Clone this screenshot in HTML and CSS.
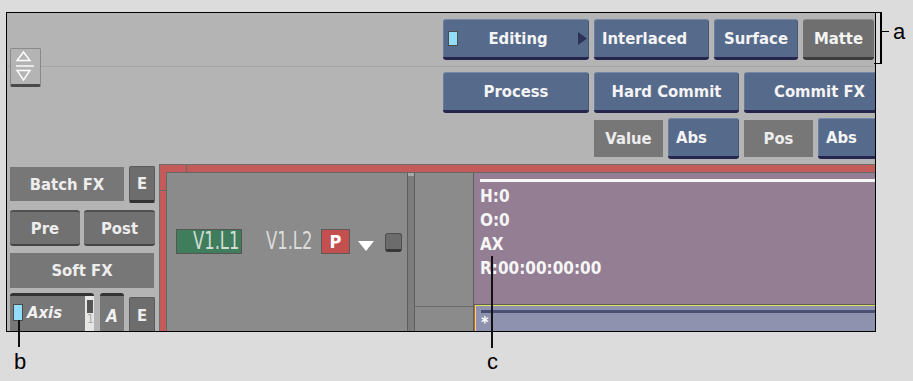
FILE: index.html
```html
<!DOCTYPE html>
<html lang="en">
<head>
    <meta charset="UTF-8">
    <meta name="viewport" content="width=device-width, initial-scale=1.0">
    <title>Batch FX - Editing Menu</title>
  <link rel="stylesheet" href="styles.css">
</head>
<body>
    <div class="stage">
        <div class="panel">
            <div class="top">
                <div class="toggle">
                    <svg width="29" height="35" viewBox="0 0 29 35">
                        <path d="M12.5 3 L19 11.5 L6 11.5 Z" fill="none" stroke="#fff" stroke-width="1.4"/>
                        <path d="M5 17 H23" stroke="#fff" stroke-width="1.4"/>
                        <path d="M6 21.5 L19 21.5 L12.5 31 Z" fill="none" stroke="#fff" stroke-width="1.4"/>
                    </svg>
                </div>
                <div class="controls">
                    <div class="row">
                        <div class="btn blue editing"><span class="led"></span><span class="label">Editing</span>
                            <svg class="arrow" width="9" height="13" viewBox="0 0 9 13"><path d="M0 0 L9 6.5 L0 13 Z" fill="#2b3157"/></svg>
                        </div>
                        <div class="btn blue left interlaced">Interlaced</div>
                        <div class="btn blue surface">Surface</div>
                        <div class="btn dark matte">Matte</div>
                    </div>
                    <div class="row row2">
                        <div class="btn blue process">Process</div>
                        <div class="btn blue hard">Hard Commit</div>
                        <div class="btn blue commit">Commit FX</div>
                    </div>
                    <div class="row row3">
                        <div class="flat mode">Value</div>
                        <div class="btn blue left abs">Abs</div>
                        <div class="flat mode">Pos</div>
                        <div class="btn blue left abs">Abs</div>
                    </div>
                </div>
            </div>

            <div class="bottom">
                <div class="side">
                    <div class="side-row">
                        <div class="flat batch">Batch FX</div>
                        <div class="ebtn">E</div>
                    </div>
                    <div class="side-row gap">
                        <div class="raised pre">Pre</div>
                        <div class="raised post">Post</div>
                    </div>
                    <div class="side-row gap">
                        <div class="flat soft">Soft FX</div>
                    </div>
                    <div class="side-row axis-row">
                        <div class="axis">
                            <span class="led"></span>
                            <span class="axis-name">Axis</span>
                            <span class="axis-scroll"><span class="thumb"></span><span class="num">1</span></span>
                        </div>
                        <div class="axis-a">A</div>
                        <div class="ebtn axis-e">E</div>
                    </div>
                </div>

                <div class="track">
                    <div class="track-inner">
                        <div class="layers">
                            <div class="layer-row">
                                <div class="layer-on"><span class="narrow">V1.L1</span></div>
                                <div class="layer-label"><span class="narrow">V1.L2</span></div>
                                <div class="proxy">P</div>
                                <svg class="drop" width="16" height="10" viewBox="0 0 16 10"><path d="M0 0 H16 L8 10 Z" fill="#fff"/></svg>
                                <div class="knob"></div>
                            </div>
                        </div>
                        <div class="scroll"></div>
                        <div class="gutter"></div>
                        <div class="clip">
                            <div class="clip-info">
                                <div class="clip-bar"></div>
                                <div class="clip-lines">
                                    <div>H:0</div>
                                    <div>O:0</div>
                                    <div>AX</div>
                                    <div>R:00:00:00:00</div>
                                </div>
                            </div>
                            <div class="clip-next">
                                <div class="next-bar"></div>
                                <span class="star">*</span>
                            </div>
                        </div>
                    </div>
                </div>
            </div>
        </div>

        <div class="bracket"></div>
        <div class="tick-a"></div>
        <div class="callout call-a">a</div>
        <div class="leader lead-b"></div>
        <div class="callout call-b">b</div>
        <div class="leader lead-c"></div>
        <div class="callout call-c">c</div>
    </div>
</body>
</html>
```

FILE: styles.css
```css
body { margin: 0; background: #dcdcdc; font-family: "DejaVu Sans Condensed", "DejaVu Sans", sans-serif; font-stretch: condensed; }
.stage { position: relative; width: 913px; height: 381px; overflow: hidden; }
.panel { margin: 12px 0 0 6px; width: 868px; height: 318px; border: 1px solid #000; background: #b4b4b4; overflow: hidden; }

/* top area: toggle + editing controls */
.top { box-sizing: border-box; height: 151px; padding: 6px 0 0 3px; display: flex; align-items: flex-start; background: linear-gradient(#a6a6a6, #a6a6a6) 0 53px / 100% 1px no-repeat; }
.toggle { box-sizing: border-box; width: 31px; height: 39px; margin-top: 29px; border: 1px solid #8a8a8a; border-bottom: 3px solid #4a4a4a; border-radius: 2px; background: #b4b4b4; flex-shrink: 0; }
.toggle svg { display: block; }
.controls { margin-left: 402px; flex-shrink: 0; }
.row { display: flex; gap: 5px; align-items: flex-start; }
.row2 { margin-top: 12px; }
.row3 { margin-top: 5px; margin-left: 151px; }

.btn { box-sizing: border-box; height: 41px; display: flex; align-items: center; justify-content: center; color: #f4f4f4; font-size: 16.5px; font-weight: bold; border-radius: 3px; flex-shrink: 0; }
.blue { background: #566a8b; border-top: 1px solid #7587a6; border-bottom: 3px solid #25254e; box-shadow: inset 1px 0 #687b9b, inset -1px 0 #475877; }
.dark { background: #6f6f6f; border-top: 1px solid #8c8c8c; border-bottom: 3px solid #3c3c3c; }
.left { justify-content: flex-start; padding-left: 8px; }
.flat { box-sizing: border-box; display: flex; align-items: center; justify-content: center; background: #777; color: #ededed; font-size: 16.5px; font-weight: bold; flex-shrink: 0; }

.editing { width: 146px; justify-content: space-between; padding: 0 2px 0 5px; }
.editing .label { flex: 1; text-align: center; }
.led { box-sizing: border-box; width: 10px; height: 15px; background: #93ddfb; border: 1px solid #4c4c4c; flex-shrink: 0; }
.arrow { display: block; }
.interlaced { width: 115px; }
.surface { width: 84px; }
.matte { width: 71px; }
.process { width: 146px; }
.hard { width: 145px; }
.commit { width: 147px; padding-left: 4px; }
.mode { width: 69px; height: 37px; margin-top: 2px; }
.abs { width: 71px; }

/* bottom area */
.bottom { display: flex; height: 167px; }
.side { box-sizing: border-box; width: 152px; padding-left: 3px; flex-shrink: 0; }
.side-row { display: flex; align-items: flex-start; margin-top: 2px; }
.side-row.gap { margin-top: 7px; }
.batch { width: 114px; height: 34px; margin-top: 1px; }
.ebtn { box-sizing: border-box; width: 26px; height: 37px; margin-left: 5px; display: flex; align-items: center; justify-content: center; background: #6d6d6d; border: 1px solid #5a5a5a; border-bottom: 3px solid #333; border-radius: 2px; color: #ededed; font-size: 16.5px; font-weight: bold; }
.raised { box-sizing: border-box; height: 36px; display: flex; align-items: center; justify-content: center; background: #717171; border-top: 2px solid #505050; border-bottom: 2px solid #454545; border-radius: 3px; color: #ededed; font-size: 16.5px; font-weight: bold; }
.pre { width: 70px; }
.post { width: 71px; margin-left: 4px; }
.soft { width: 144px; height: 35px; }

.axis-row { margin-top: 5px; }
.axis { box-sizing: border-box; width: 84px; height: 40px; display: flex; align-items: flex-start; padding: 8px 0 0 3px; background: #777; border-top: 3px solid #333; border-radius: 3px 3px 0 0; }
.axis .led { height: 17px; }
.axis-name { margin-left: 4px; color: #f2f2f2; font-size: 16.5px; font-weight: bold; font-style: italic; line-height: 17px; }
.axis-scroll { box-sizing: border-box; width: 9px; height: 37px; margin: -8px 0 0 auto; background: #e6e6e6; padding: 4px 0 0 2px; }
.axis-scroll .thumb { display: block; width: 6px; height: 13px; background: #555; }
.axis-scroll .num { display: block; color: #aaa; font-size: 12px; line-height: 12px; }
.axis-a { box-sizing: border-box; width: 24px; height: 40px; margin-left: 6px; padding-top: 10px; text-align: center; background: #777; border-top: 3px solid #333; border-radius: 3px 3px 0 0; color: #f2f2f2; font-size: 17px; font-weight: bold; font-style: italic; }
.axis-e { margin-top: 4px; height: 40px; align-items: flex-start; padding-top: 8px; border-bottom: none; }

/* track view */
.track { box-sizing: border-box; flex: 1; padding: 7px 0 0 6px; border-top: 1px solid #6e6e6e; border-left: 1px solid #6e6e6e; background: linear-gradient(#6a6a6a, #6a6a6a) 26px 0 / 1px 8px no-repeat, linear-gradient(#6a6a6a, #6a6a6a) 0 25px / 7px 1px no-repeat, #c45b5b; }
.track-inner { box-sizing: border-box; height: 100%; display: flex; border-top: 1px solid #666; border-left: 1px solid #666; }
.layers { box-sizing: border-box; width: 240px; padding: 56px 0 0 9px; background: #8b8b8b; flex-shrink: 0; }
.layer-row { display: flex; align-items: center; height: 25px; }
.narrow { display: inline-block; font-size: 24px; line-height: 23px; color: #dcdcdc; transform: scaleX(0.76); transform-origin: left center; white-space: nowrap; }
.layer-on { box-sizing: border-box; width: 66px; height: 25px; padding-left: 16px; background: #3f7d5d; border: 1px solid #555; }
.layer-on .narrow { color: #d3ddd5; }
.layer-label { width: 47px; margin-left: 24px; }
.proxy { box-sizing: border-box; width: 29px; height: 25px; margin-left: 8px; display: flex; align-items: center; justify-content: center; background: #c34f4f; border: 1px solid #5a5a5a; color: #fff; font-size: 18px; font-weight: bold; }
.drop { display: block; margin: 8px 0 0 8px; }
.knob { box-sizing: border-box; width: 17px; height: 19px; margin: 2px 0 0 11px; background: #6c6c6c; border: 1px solid #4e4e4e; border-bottom: 3px solid #383838; border-radius: 3px; }

.scroll { box-sizing: border-box; width: 8px; flex-shrink: 0; border-left: 1px solid #5e5e5e; border-right: 1px solid #5e5e5e; background: linear-gradient(#a9a9a9 0 3px, #7d7d7d 3px); }
.gutter { box-sizing: border-box; width: 59px; flex-shrink: 0; border-right: 1px solid #5e5e5e; background: linear-gradient(#6e6e6e, #6e6e6e) 0 133px / 100% 1px no-repeat, #8b8b8b; }
.clip { flex: 1; display: flex; flex-direction: column; }
.clip-info { box-sizing: border-box; height: 134px; padding: 6px 0 0 6px; background: #937e94; border-bottom: 1px solid #5c5c5c; }
.clip-bar { height: 3px; background: #f6f6f6; }
.clip-lines { margin-top: 2px; color: #f6f6f6; font-size: 17px; font-weight: bold; line-height: 24px; }
.clip-next { flex: 1; margin-left: 1px; padding: 4px 0 0 5px; background: #8e92ae; border-top: 1px solid #e4e05a; border-left: 1px solid #e4e05a; }
.next-bar { height: 3px; background: #4b5072; }
.star { display: block; color: #fff; font-size: 16px; font-weight: bold; line-height: 16px; margin-top: 2px; }

/* callouts */
.bracket { position: absolute; left: 874px; top: 12px; width: 6px; height: 50px; border: 1px solid #000; border-left: none; border-right-width: 2px; }
.tick-a { position: absolute; left: 881px; top: 31px; width: 8px; height: 1px; background: #000; }
.leader { position: absolute; width: 2px; background: #111; }
.lead-b { left: 18px; top: 320px; height: 27px; }
.lead-c { left: 491px; top: 256px; height: 92px; }
.callout { position: absolute; font-family: "Liberation Sans", Arial, sans-serif; font-size: 22px; line-height: 22px; color: #000; }
.call-a { left: 893px; top: 21px; }
.call-b { left: 14px; top: 351px; }
.call-c { left: 487px; top: 351px; }
```
